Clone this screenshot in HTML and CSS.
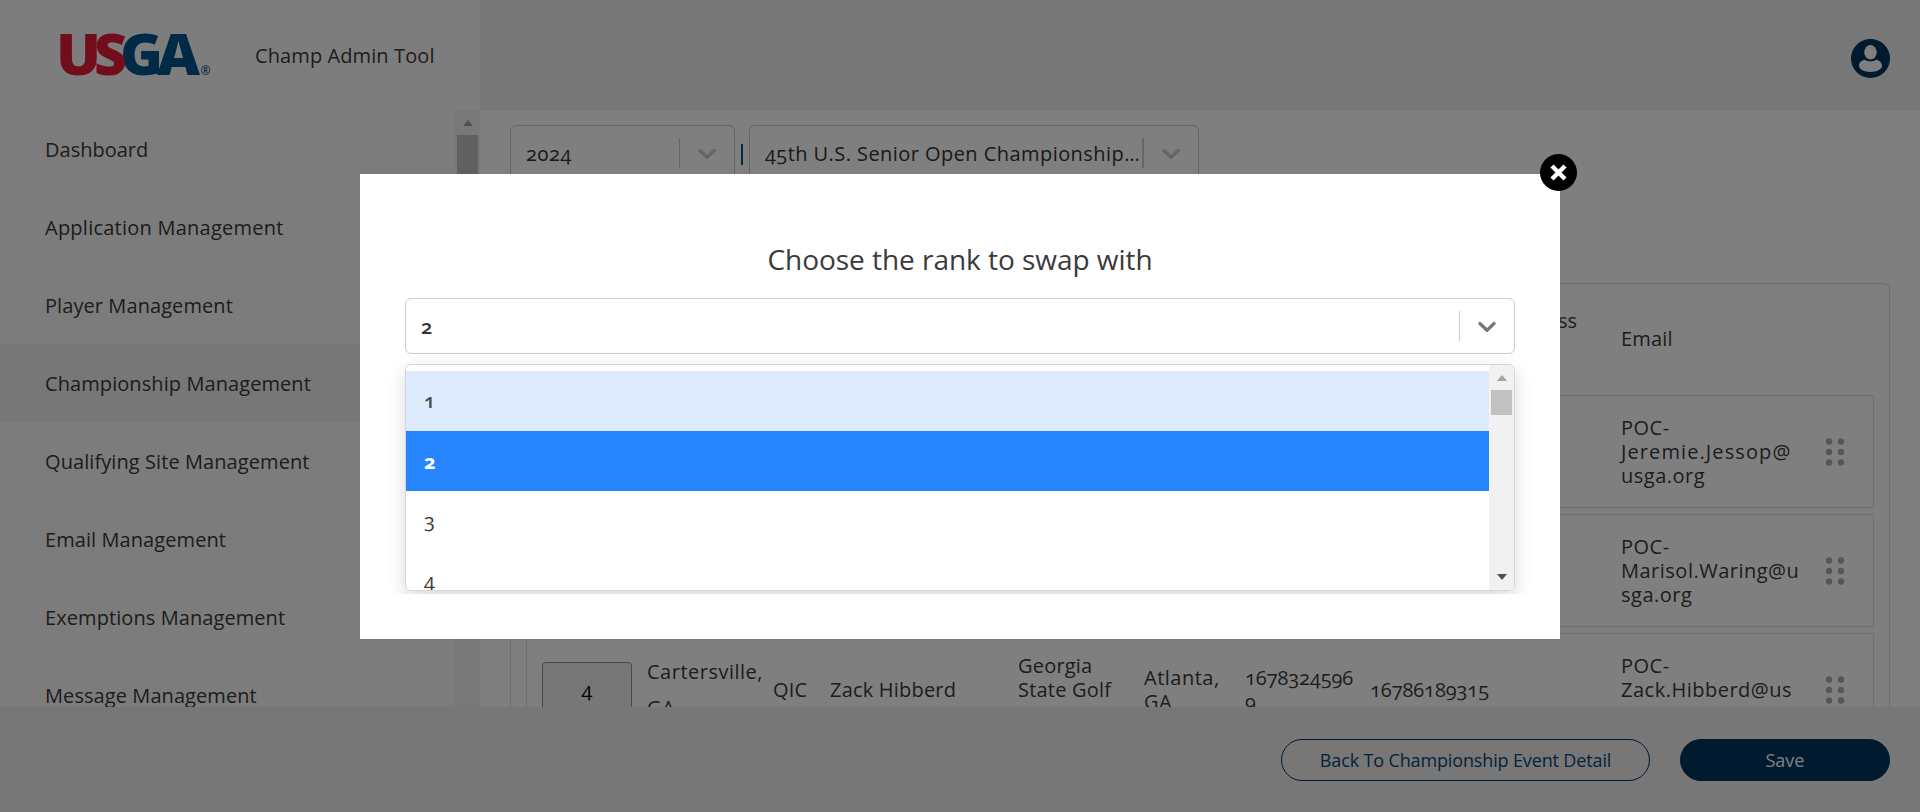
FILE: index.html
```html
<!DOCTYPE html>
<html lang="en">
<head>
<meta charset="utf-8">
<title>Champ Admin Tool</title>
<link rel="stylesheet" href="styles.css">
</head>
<body>
<div class="app">
  <header class="header">
    <div class="brand">
      <svg class="logo" width="152" height="44" viewBox="0 0 152 44" role="img" aria-label="USGA">
        <g class="logo-letters">
          <text class="blue" x="60" y="42" textLength="43" lengthAdjust="spacingAndGlyphs">G</text>
          <text class="blue" x="97" y="42" textLength="43" lengthAdjust="spacingAndGlyphs">A</text>
          <text class="red" x="-4" y="42" textLength="45" lengthAdjust="spacingAndGlyphs">U</text>
          <text class="red" x="34" y="42" textLength="33" lengthAdjust="spacingAndGlyphs">S</text>
        </g>
        <text class="logo-mark" x="140.500" y="42">®</text>
      </svg>
      <span class="app-name">Champ Admin Tool</span>
    </div>
    <div class="topbar">
      <svg class="user" width="39" height="39" viewBox="0 0 39 39">
        <circle cx="19.500" cy="19.500" r="19.500" fill="#003461"/>
        <ellipse cx="19.500" cy="13.300" rx="6.200" ry="7.200" fill="#fff"/>
        <path d="M14 20.800C17 22.900 22 22.900 25 20.800C28.500 21.200 31 23.600 31 26.600C31 30.600 25.500 33 19.500 33S8 30.600 8 26.600C8 23.600 10.500 21.200 14 20.800Z" fill="#fff"/>
      </svg>
    </div>
  </header>

  <div class="middle">
    <nav class="sidebar">
      <ul class="menu">
        <li class="tight">Dashboard</li>
        <li class="loose">Application Management</li>
        <li>Player Management</li>
        <li class="current">Championship Management</li>
        <li>Qualifying Site Management</li>
        <li>Email Management</li>
        <li>Exemptions Management</li>
        <li>Message Management</li>
      </ul>
      <div class="scrollbar side-scroll"><i class="up"></i><i class="thumb"></i></div>
    </nav>

    <main class="main">
      <div class="filters">
        <div class="select year"><span class="value">2024</span><i class="sep"></i>
          <svg class="chev" width="30" height="30" viewBox="0 0 20 20"><path d="M4.516 7.548c0.436-0.446 1.043-0.481 1.576 0l3.908 3.747 3.908-3.747c0.533-0.481 1.141-0.446 1.574 0 0.436 0.445 0.408 1.197 0 1.615-0.406 0.418-4.695 4.502-4.695 4.502-0.217 0.223-0.502 0.335-0.787 0.335s-0.570-0.112-0.789-0.335c0 0-4.287-4.084-4.695-4.502s-0.436-1.170 0-1.615z"/></svg>
        </div>
        <span class="pipe"></span>
        <div class="select event"><span class="value">45th U.S. Senior Open Championship…</span><i class="sep"></i>
          <svg class="chev" width="30" height="30" viewBox="0 0 20 20"><path d="M4.516 7.548c0.436-0.446 1.043-0.481 1.576 0l3.908 3.747 3.908-3.747c0.533-0.481 1.141-0.446 1.574 0 0.436 0.445 0.408 1.197 0 1.615-0.406 0.418-4.695 4.502-4.695 4.502-0.217 0.223-0.502 0.335-0.787 0.335s-0.570-0.112-0.789-0.335c0 0-4.287-4.084-4.695-4.502s-0.436-1.170 0-1.615z"/></svg>
        </div>
      </div>

      <section class="table">
        <div class="row head">
          <span></span><span></span><span></span><span></span><span></span><span></span><span></span>
          <span class="tall business"><span>Representative Business</span><span>Phone</span></span>
          <span>Email</span><span></span>
        </div>
        <div class="row">
          <span></span><span></span><span></span><span></span><span></span><span></span><span></span><span></span>
          <span class="mail">POC-<br><span class="wide">Jeremie.Jessop@</span><br>usga.org</span>
          <svg class="grip" width="20" height="30" viewBox="0 0 20 30"><circle cx="3" cy="4.500" r="3.200"/><circle cx="15" cy="4.500" r="3.200"/><circle cx="3" cy="15" r="3.200"/><circle cx="15" cy="15" r="3.200"/><circle cx="3" cy="25.500" r="3.200"/><circle cx="15" cy="25.500" r="3.200"/></svg>
        </div>
        <div class="row">
          <span></span><span></span><span></span><span></span><span></span><span></span><span></span><span></span>
          <span class="mail">POC-<br>Marisol.Waring@u<br>sga.org</span>
          <svg class="grip" width="20" height="30" viewBox="0 0 20 30"><circle cx="3" cy="4.500" r="3.200"/><circle cx="15" cy="4.500" r="3.200"/><circle cx="3" cy="15" r="3.200"/><circle cx="15" cy="15" r="3.200"/><circle cx="3" cy="25.500" r="3.200"/><circle cx="15" cy="25.500" r="3.200"/></svg>
        </div>
        <div class="row">
          <span class="rank">4</span>
          <span class="tall city">Cartersville,<br>GA</span>
          <span>QIC</span>
          <span class="name">Zack Hibberd</span>
          <span>Georgia<br>State Golf<br>Association</span>
          <span class="city">Atlanta,<br>GA</span>
          <span class="phone">1678324596<br>9</span>
          <span class="phone">16786189315</span>
          <span class="mail">POC-<br>Zack.Hibberd@us<br>ga.org</span>
          <svg class="grip" width="20" height="30" viewBox="0 0 20 30"><circle cx="3" cy="4.500" r="3.200"/><circle cx="15" cy="4.500" r="3.200"/><circle cx="3" cy="15" r="3.200"/><circle cx="15" cy="15" r="3.200"/><circle cx="3" cy="25.500" r="3.200"/><circle cx="15" cy="25.500" r="3.200"/></svg>
        </div>
      </section>
    </main>
  </div>

  <footer class="footer">
    <button class="btn back">Back To Championship Event Detail</button>
    <button class="btn save">Save</button>
  </footer>
</div>

<div class="overlay">
  <div class="modal">
    <div class="modal-body">
      <h2 class="title">Choose the rank to swap with</h2>
      <div class="select swap"><span class="value">2</span><i class="sep"></i>
        <svg class="chev" width="30" height="30" viewBox="0 0 20 20"><path d="M4.516 7.548c0.436-0.446 1.043-0.481 1.576 0l3.908 3.747 3.908-3.747c0.533-0.481 1.141-0.446 1.574 0 0.436 0.445 0.408 1.197 0 1.615-0.406 0.418-4.695 4.502-4.695 4.502-0.217 0.223-0.502 0.335-0.787 0.335s-0.570-0.112-0.789-0.335c0 0-4.287-4.084-4.695-4.502s-0.436-1.170 0-1.615z"/></svg>
      </div>
      <div class="dropdown">
        <ul class="options">
          <li class="focused">1</li>
          <li class="selected">2</li>
          <li>3</li>
          <li>4</li>
        </ul>
        <div class="scrollbar"><i class="up"></i><i class="thumb"></i><i class="down"></i></div>
      </div>
    </div>
    <svg class="close" width="37" height="37" viewBox="0 0 37 37"><circle cx="18.500" cy="18.500" r="18.500"/><path d="M12 12L25 25M25 12L12 25" stroke="#fff" stroke-width="4.400"/></svg>
  </div>
</div>
</body>
</html>
```

FILE: styles.css
```css
* { box-sizing: border-box; }

body {
  margin: 0;
  width: 1920px;
  height: 812px;
  overflow: hidden;
  font-family: "Open Sans", "Noto Sans", sans-serif;
  font-size: 20px;
  font-weight: 400;
  line-height: 24px;
  color: #3a3a3a;
  font-variant-numeric: oldstyle-nums;
}

ul { list-style: none; margin: 0; padding: 0; }

.app { display: flex; flex-direction: column; height: 812px; background: #fff; }

.header { display: flex; flex: 0 0 110px; }
.brand {
  display: flex;
  align-items: center;
  width: 480px;
  padding-left: 60px;
  background: #fbfbfb;
}
.logo { display: block; overflow: visible; }
.logo-letters { font-size: 57px; font-weight: 800; }
.logo .red { fill: #e51a36; }
.logo .blue { fill: #00548c; }
.logo-mark { font-size: 12px; font-weight: 600; fill: #00548c; }
.app-name { margin-left: 43px; padding-top: 2px; letter-spacing: 0.1px; }
.topbar {
  display: flex;
  flex: 1;
  justify-content: flex-end;
  align-items: flex-start;
  padding: 39px 30px 0 0;
  background: #efefef;
}

.middle { display: flex; flex: 1; min-height: 0; overflow: hidden; }

.sidebar { display: flex; width: 480px; background: #f8f8f8; }
.menu { flex: 1; }
.menu li { height: 78px; padding: 28px 0 0 45px; letter-spacing: 0.08px; }
.menu .tight { letter-spacing: 0; }
.menu .loose { letter-spacing: 0.24px; }
.menu .current { background: #efefef; }

.scrollbar {
  display: flex;
  flex: 0 0 25px;
  flex-direction: column;
  align-items: center;
  background: #f1f1f1;
}
.scrollbar .up {
  margin-top: 10px;
  border: 5.5px solid transparent;
  border-top: 0;
  border-bottom: 6px solid #a3a3a3;
}
.scrollbar .down {
  margin: auto 0 10px;
  border: 5.5px solid transparent;
  border-bottom: 0;
  border-top: 6px solid #505050;
}
.scrollbar .thumb { width: 21px; height: 25px; margin-top: 9px; background: #c1c1c1; }
.side-scroll .thumb { height: 380px; }

.main { flex: 1; padding: 15px 30px 0; }

.filters { display: flex; align-items: center; height: 56px; }
.select {
  display: flex;
  align-items: center;
  height: 56px;
  padding-left: 15px;
  border: 1px solid #ccc;
  border-radius: 6px;
  color: #333;
  font-weight: 500;
}
.select .value { flex: 1; padding-top: 2px; white-space: nowrap; }
.select .sep { width: 1px; height: 30px; background: #ccc; }
.select .chev { margin: 0 12px; fill: #ccc; }
.year { width: 225px; }
.year .value { letter-spacing: 0.6px; }
.event { width: 450px; }
.event .value { letter-spacing: 0.44px; }
.event .sep { width: 2px; }
.pipe { width: 2px; height: 21px; margin: 2px 6px 0; background: #00548c; }

.table {
  height: 600px;
  margin-top: 102px;
  padding: 0 15px;
  border: 1px solid #dedede;
  border-radius: 6px;
}
.row {
  display: grid;
  grid-template-columns: 105px 126px 57px 188px 126px 101px 125px 251px 205px 20px;
  align-items: center;
  height: 113px;
  margin-bottom: 6px;
  padding-left: 15px;
  border: 1px solid #dedede;
  letter-spacing: 0.2px;
}
.row.head { height: 111px; margin: 0; padding-bottom: 2px; border-color: transparent; }
.tall { line-height: 36px; }
.business { display: flex; flex-direction: column; width: 207px; white-space: nowrap; letter-spacing: 0; }
.business span:first-child { align-self: flex-end; }
.city { letter-spacing: 0.5px; }
.phone { letter-spacing: -0.08px; }
.mail { letter-spacing: 0.5px; }
.wide { letter-spacing: 1.1px; }
.rank {
  display: flex;
  align-items: center;
  justify-content: center;
  width: 90px;
  height: 60px;
  margin-top: 5px;
  padding-bottom: 5px;
  border: 1px solid #949494;
  border-radius: 4px;
  background: #efefef;
  color: #000;
  font-weight: 500;
}
.grip { fill: #acacac; }

.footer {
  display: flex;
  flex: 0 0 105px;
  align-items: flex-start;
  justify-content: flex-end;
  gap: 30px;
  padding: 32px 30px 0;
  background: #efefef;
}
.btn {
  height: 42px;
  padding: 0;
  border: 1px solid #003461;
  border-radius: 21px;
  font: inherit;
  font-size: 18px;
}
.back { width: 369px; background: transparent; color: #0a4673; letter-spacing: -0.14px; }
.save { width: 210px; background: #003461; color: #fff; font-weight: 500; }

.overlay {
  position: fixed;
  inset: 0;
  display: flex;
  align-items: flex-start;
  justify-content: center;
  padding-top: 174px;
  background: rgba(0, 0, 0, 0.5);
}
.modal { position: relative; width: 1200px; height: 465px; background: #fff; }
.modal-body { height: 420px; padding: 64px 45px 0; overflow: hidden; }
.title {
  margin: 0 0 18px;
  font-size: 28px;
  font-weight: 400;
  line-height: 42px;
  text-align: center;
  letter-spacing: -0.04px;
}
.swap { font-weight: 600; }
.swap .chev { fill: #777; }
.dropdown {
  display: flex;
  height: 227px;
  margin-top: 10px;
  overflow: hidden;
  border: 1px solid #d6d6d6;
  border-radius: 6px;
  box-shadow: 0 6px 18px rgba(0, 0, 0, 0.15);
}
.options { flex: 1; padding-top: 6px; font-weight: 500; }
.options li { height: 60px; padding: 18px 18px; }
.options .focused { background: #deebff; color: #4d4d4d; font-weight: 600; }
.options .selected { padding-top: 19px; background: #2684ff; color: #fff; font-weight: 700; }
.close { position: absolute; top: -20px; right: -17px; }
```
